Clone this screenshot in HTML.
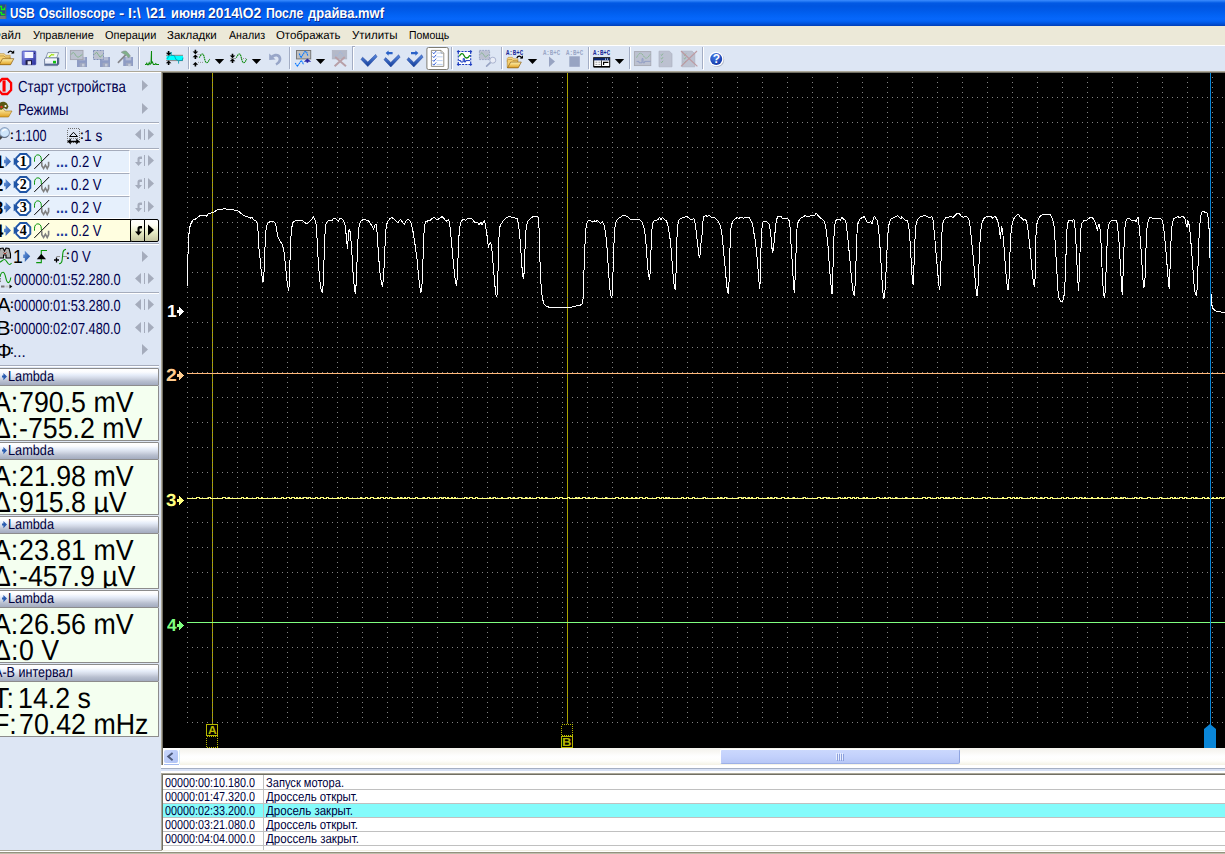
<!DOCTYPE html>
<html lang="ru"><head><meta charset="utf-8"><title>USB Oscilloscope</title>
<style>
html,body{margin:0;padding:0;background:#dde6f4;overflow:hidden}
#root{position:relative;width:1225px;height:854px;overflow:hidden;background:#dde6f4;font-family:"Liberation Sans",sans-serif}
#root div,#root span,#root svg{position:absolute;box-sizing:border-box}
.t{white-space:pre;transform-origin:0 0;text-rendering:geometricPrecision}
#title{left:0;top:0;width:1225px;height:26px;background:linear-gradient(to bottom,#3c8cff 0px,#1f74f2 1.5px,#0259e4 3px,#0055e0 6px,#005ae8 10px,#0262f4 15px,#0667fb 19px,#0463f5 21px,#0057e3 23px,#0048c8 25px,#003cb4 26px)}
#menu{left:0;top:26px;width:1225px;height:19px;background:#ece9d8}
#tb{left:0;top:45px;width:1225px;height:26px;background:#dde6f4;border-top:1px solid #fff}
#tbline{left:0;top:71px;width:1225px;height:1px;background:#aca899}
.sep{top:47px;width:2px;height:22px;border-left:1px solid #a7b1c6;border-right:1px solid #fff}
#panel{left:0;top:73px;width:161px;height:781px;background:#dde6f4}
#pwhite{left:0;top:72px;width:161px;height:1px;background:#fff}
.hl{left:0;width:159px;height:2px;border-top:1px solid #a5acbc;border-bottom:1px solid #fff}
.row{left:0;width:130px;height:23px;background:#e6f0fc;border-top:1px solid #a5acbc;border-bottom:1px solid #fff;border-right:1px solid #fff}
.rowsel{left:0;width:131px;height:23px;background:#fffee0;border-top:1px solid #000;border-bottom:1px solid #000}
.btn{height:23px;border:1px solid #000;background:linear-gradient(to bottom,#fff 0,#fdfdf4 25%,#e6eac4 60%,#c6c6a2 100%)}
.hdr{left:-2px;width:161px;height:18px;border:1px solid #8c8c8c;border-radius:1px;background:linear-gradient(to bottom,#ffffff 0,#fbfcfe 3px,#e6edf9 6px,#d3d9e6 9px,#b9c0d0 12px,#a3abbf 16px)}
.val{left:-2px;width:161px;height:55px;border:1px solid #8c8c8c;border-top:none;border-radius:0 0 1px 1px;background:#f4fff0}
#plotb{left:161px;top:71px;width:1064px;height:694px;background:#716f64;border-left:1px solid #aca899;border-top:1px solid #aca899}
#plot{left:163px;top:73px;width:1062px;height:675px;background:#000}
#hs{left:163px;top:748px;width:1062px;height:17px;background:linear-gradient(to bottom,#f3f1ec 0,#f7f6f2 3px,#fdfdfc 7px,#fff 9px,#fefefb 13px,#f3f1e4 17px)}
#hsl{left:164px;top:750px;width:14px;height:13px;border-radius:2px;background:linear-gradient(135deg,#c9d7fc 0,#bdcdf9 50%,#aec1f4 100%);box-shadow:0 0 0 1px #fff}
#hst{left:720px;top:749px;width:240px;height:15px;border:1px solid #fff;border-bottom-color:#9db0e6;border-right-color:#8fa4e0;border-radius:2px;background:linear-gradient(to bottom,#cbd8fd 0,#c3d1fc 50%,#b7c7f6 100%)}
#split{left:161px;top:765px;width:1064px;height:8px;background:linear-gradient(to bottom,#fff 0,#fff 3px,#a5afc3 3px,#a5afc3 4px,#d7e1f5 4px,#d7e1f5 6px,#fff 6px,#fff 8px)}
#list{left:161px;top:773px;width:1064px;height:77px;background:#fff;border-top:2px solid #716f64;border-left:2px solid #716f64}
.lr{left:163px;width:1062px;height:14px;border-bottom:1px solid #c0c0c0}
.lr.sel{background:#84fbfb}
#lcol{left:263px;top:775px;width:1px;height:75px;background:#c0c0c0}
#bottom{left:0;top:850px;width:1225px;height:4px;background:linear-gradient(to bottom,#f1efe2 0,#f1efe2 1px,#fff 1px,#fff 2px,#94927f 2px,#94927f 3px,#c0beac 3px,#c0beac 4px)}
.grp{left:0;top:0;width:0;height:0}
#listb{left:161px;top:773px;width:1064px;height:1px;background:#aca899}
#listb2{left:161px;top:773px;width:1px;height:77px;background:#aca899}
#pbot{left:0;top:850px;width:162px;height:1px;background:#aca899}
#hsl2{left:164px;top:764px;width:15px;height:1px;background:#a5bcf0}
#hsl3{left:179px;top:750px;width:1px;height:14px;background:#d9eef8}
#hsw{left:163px;top:748px;width:17px;height:17px;background:#fff}

</style></head>
<body>
<div id="root">
<div id="title"></div>
<div id="menu"></div>
<div id="tb"></div>
<div id="tbline"></div>
<div id="panel"></div>
<div id="pwhite"></div>
<div class="hl" style="top:122px"></div>
<div class="hl" style="top:148px"></div>
<div class="hl" style="top:243px"></div>
<div class="hl" style="top:292px"></div>
<div class="hl" style="top:365px"></div>
<div class="row" style="top:150px"></div>
<div class="row" style="top:173px"></div>
<div class="row" style="top:196px"></div>
<div class="rowsel" style="top:219px"></div>
<div class="btn" style="left:130px;top:219px;width:15px;border-radius:2px 0 0 2px"></div><div class="btn" style="left:144px;top:219px;width:15px;border-radius:0 2px 2px 0"></div>
<div class="hdr" style="top:368px"></div><div class="val" style="top:386px"></div>
<div class="hdr" style="top:442px"></div><div class="val" style="top:460px"></div>
<div class="hdr" style="top:516px"></div><div class="val" style="top:534px"></div>
<div class="hdr" style="top:590px"></div><div class="val" style="top:608px"></div>
<div class="hdr" style="top:664px"></div><div class="val" style="top:682px"></div>
<div id="plotb"></div><div id="plot"></div>
<div id="hs"></div>
<div id="hsw"></div><div id="hsl"></div><div id="hsl2"></div><div id="hsl3"></div>
<div id="hst"></div>
<div id="split"></div>
<div id="list"></div>
<div class="lr" style="top:776px"></div>
<div class="lr" style="top:790px"></div>
<div class="lr sel" style="top:804px"></div>
<div class="lr" style="top:818px"></div>
<div class="lr" style="top:832px"></div>
<div class="lr" style="top:846px"></div>
<div id="lcol"></div><div id="listb"></div><div id="listb2"></div>
<div id="bottom"></div><div id="pbot"></div>
<svg id="scope" width="1225" height="854" viewBox="0 0 1225 854" style="left:0;top:0" shape-rendering="crispEdges">
<g stroke="#aaa200" stroke-width="1"><line x1="212.5" y1="73" x2="212.5" y2="724"/><line x1="567.5" y1="73" x2="567.5" y2="724"/></g>
<path d="M187.5 77V723 M212.5 77V723 M237.5 77V723 M262.5 77V723 M287.5 77V723 M312.5 77V723 M337.5 77V723 M362.5 77V723 M387.5 77V723 M412.5 77V723 M437.5 77V723 M462.5 77V723 M487.5 77V723 M512.5 77V723 M537.5 77V723 M562.5 77V723 M587.5 77V723 M612.5 77V723 M637.5 77V723 M662.5 77V723 M687.5 77V723 M712.5 77V723 M737.5 77V723 M762.5 77V723 M787.5 77V723 M812.5 77V723 M837.5 77V723 M862.5 77V723 M887.5 77V723 M912.5 77V723 M937.5 77V723 M962.5 77V723 M987.5 77V723 M1012.5 77V723 M1037.5 77V723 M1062.5 77V723 M1087.5 77V723 M1112.5 77V723 M1137.5 77V723 M1162.5 77V723 M1187.5 77V723 M1212.5 77V723 M187 97.5H1225 M187 122.5H1225 M187 147.5H1225 M187 172.5H1225 M187 197.5H1225 M187 222.5H1225 M187 247.5H1225 M187 272.5H1225 M187 297.5H1225 M187 322.5H1225 M187 347.5H1225 M187 372.5H1225 M187 397.5H1225 M187 422.5H1225 M187 447.5H1225 M187 472.5H1225 M187 497.5H1225 M187 522.5H1225 M187 547.5H1225 M187 572.5H1225 M187 597.5H1225 M187 622.5H1225 M187 647.5H1225 M187 672.5H1225 M187 697.5H1225 M187 722.5H1225" stroke="#848484" stroke-width="1" stroke-dasharray="1 4" fill="none"/>
<path d="M1204 748V729L1210 724L1216 729V748Z" fill="#0a86d8" shape-rendering="auto"/>
<line x1="187" y1="373.5" x2="1225" y2="373.5" stroke="#ffb97a"/>
<line x1="187" y1="622.5" x2="1225" y2="622.5" stroke="#80ff80"/>
<path d="M187 498.5H196V497.5H199V498.5H208V497.5H210V498.5H222V497.5H225V498.5H228V497.5H229V498.5H241V497.5H243V498.5H246V497.5H247V498.5H256V497.5H258V498.5H261V497.5H262V498.5H274V497.5H275V498.5H281V497.5H283V498.5H286V497.5H289V498.5H291V497.5H294V498.5H296V497.5H297V498.5H299V497.5H300V498.5H303V497.5H306V498.5H308V497.5H310V498.5H315V497.5H317V498.5H320V497.5H323V498.5H326V497.5H328V498.5H337V497.5H338V498.5H340V497.5H342V498.5H346V497.5H348V498.5H360V497.5H361V498.5H365V497.5H367V498.5H370V497.5H373V498.5H377V497.5H378V498.5H380V497.5H383V498.5H385V497.5H387V498.5H389V497.5H391V498.5H397V497.5H398V498.5H400V497.5H401V498.5H404V497.5H405V498.5H407V497.5H409V498.5H415V497.5H417V498.5H423V497.5H424V498.5H427V497.5H429V498.5H434V497.5H435V498.5H439V497.5H441V498.5H443V497.5H445V498.5H447V497.5H448V498.5H451V497.5H452V498.5H454V497.5H455V498.5H464V497.5H466V498.5H469V497.5H472V498.5H475V497.5H477V498.5H489V497.5H490V498.5H493V497.5H495V498.5H501V497.5H502V498.5H508V497.5H510V498.5H513V497.5H514V498.5H518V497.5H521V498.5H525V497.5H526V498.5H529V497.5H530V498.5H536V497.5H539V498.5H541V497.5H542V498.5H545V497.5H546V498.5H555V497.5H557V498.5H559V497.5H562V498.5H567V497.5H569V498.5H575V497.5H576V498.5H578V497.5H579V498.5H582V497.5H585V498.5H588V497.5H589V498.5H594V497.5H596V498.5H605V497.5H606V498.5H615V497.5H618V498.5H621V497.5H623V498.5H626V497.5H627V498.5H631V497.5H632V498.5H635V497.5H636V498.5H639V497.5H642V498.5H645V497.5H647V498.5H656V497.5H659V498.5H661V497.5H663V498.5H665V497.5H666V498.5H668V497.5H669V498.5H681V497.5H683V498.5H686V497.5H688V498.5H692V497.5H694V498.5H703V497.5H705V498.5H717V497.5H718V498.5H720V497.5H721V498.5H724V497.5H726V498.5H738V497.5H741V498.5H743V497.5H745V498.5H748V497.5H749V498.5H751V497.5H752V498.5H756V497.5H758V498.5H767V497.5H768V498.5H770V497.5H771V498.5H774V497.5H776V498.5H781V497.5H784V498.5H787V497.5H788V498.5H793V497.5H794V498.5H803V497.5H805V498.5H817V497.5H820V498.5H823V497.5H826V498.5H828V497.5H829V498.5H838V497.5H840V498.5H844V497.5H845V498.5H847V497.5H850V498.5H852V497.5H854V498.5H856V497.5H858V498.5H863V497.5H864V498.5H866V497.5H867V498.5H876V497.5H879V498.5H884V497.5H885V498.5H888V497.5H890V498.5H895V497.5H896V498.5H905V497.5H906V498.5H912V497.5H913V498.5H922V497.5H925V498.5H927V497.5H930V498.5H936V497.5H938V498.5H940V497.5H943V498.5H945V497.5H946V498.5H948V497.5H949V498.5H953V497.5H955V498.5H960V497.5H962V498.5H971V497.5H973V498.5H982V497.5H985V498.5H987V497.5H990V498.5H1002V497.5H1003V498.5H1007V497.5H1010V498.5H1012V497.5H1014V498.5H1016V497.5H1017V498.5H1019V497.5H1021V498.5H1030V497.5H1032V498.5H1034V497.5H1036V498.5H1040V497.5H1041V498.5H1044V497.5H1047V498.5H1050V497.5H1052V498.5H1061V497.5H1063V498.5H1066V497.5H1068V498.5H1074V497.5H1076V498.5H1079V497.5H1081V498.5H1084V497.5H1085V498.5H1091V497.5H1092V498.5H1097V497.5H1098V498.5H1101V497.5H1102V498.5H1111V497.5H1113V498.5H1115V497.5H1116V498.5H1120V497.5H1121V498.5H1123V497.5H1125V498.5H1134V497.5H1136V498.5H1139V497.5H1141V498.5H1147V497.5H1150V498.5H1159V497.5H1161V498.5H1170V497.5H1172V498.5H1174V497.5H1175V498.5H1179V497.5H1182V498.5H1184V497.5H1186V498.5H1191V497.5H1193V498.5H1195V497.5H1196V498.5H1202V497.5H1204V498.5H1207V497.5H1208V498.5H1212V497.5H1213V498.5H1216V497.5H1217V498.5H1219V497.5H1221V498.5H1223V497.5H1225V498.5" stroke="#ffff80" fill="none" stroke-linejoin="miter"/>
<path d="M187.5 285.5 187.5 266.0 188.7 237.7 189.4 228.3 191.2 222.9 193.0 219.9 195.5 219.2 198.2 216.6 200.8 215.5 204.2 215.2 206.5 216.2 208.2 213.9 210.3 213.2 212.6 212.8 215.0 211.4 217.7 209.4 221.0 209.2 224.4 208.8 227.8 209.4 231.1 209.7 234.5 210.1 237.5 210.5 239.9 212.4 242.6 214.5 245.3 216.4 248.0 216.8 250.0 218.2 252.0 217.5 254.0 219.9 256.0 220.9 257.4 224.2 258.1 232.3 258.7 240.4 259.0 248.5 260.1 259.2 261.2 271.3 262.5 279.4 263.0 282.4 263.8 279.4 264.4 257.9 265.2 244.4 265.7 233.7 266.5 225.6 268.2 222.9 270.2 221.5 272.9 221.3 274.9 222.9 276.2 226.9 277.6 236.3 279.6 240.4 282.3 244.4 283.6 248.5 284.6 256.5 285.7 267.3 286.7 279.4 288.1 287.5 288.3 290.5 289.2 286.2 289.7 267.3 290.4 251.2 291.0 236.3 292.1 225.6 293.1 222.2 295.8 220.5 299.1 220.2 302.5 220.5 304.5 222.2 306.1 223.6 307.9 222.9 309.9 220.9 311.9 219.5 313.3 216.4 315.0 220.2 316.0 224.2 316.8 233.7 317.7 251.2 318.7 267.3 319.8 280.8 321.2 290.2 322.2 292.6 323.0 286.2 323.6 272.7 324.1 257.9 324.7 240.4 325.2 229.6 326.0 224.2 327.5 221.3 329.5 220.5 332.2 220.2 333.5 218.4 335.6 218.2 336.9 220.2 338.2 221.3 339.9 218.4 341.6 218.8 343.6 220.9 345.0 224.9 345.9 232.3 346.7 240.4 347.4 248.5 348.1 240.4 349.0 229.6 350.1 231.6 350.8 239.0 351.7 248.5 352.4 261.9 353.2 275.4 354.3 287.5 355.3 293.6 356.2 283.5 356.8 267.3 357.5 251.2 358.2 235.0 359.1 225.6 360.7 221.5 363.2 219.5 365.8 219.8 368.5 220.9 370.6 223.6 372.3 226.9 373.7 229.3 375.0 224.9 376.3 224.6 377.3 235.0 378.0 247.1 378.8 259.2 380.0 272.7 381.3 282.1 382.4 286.4 383.3 279.4 384.2 264.6 384.8 251.2 385.5 235.0 386.3 225.6 387.7 221.5 389.8 218.8 391.7 217.5 393.8 218.8 396.1 221.3 398.2 222.6 399.5 220.2 400.8 219.5 402.5 222.2 404.2 224.5 405.6 221.5 406.9 219.9 409.2 219.9 410.9 222.9 412.7 229.6 414.0 237.7 415.4 247.1 417.0 259.2 418.3 272.7 419.7 286.2 421.0 292.6 422.1 283.5 422.7 267.3 423.2 253.8 423.7 237.7 424.5 225.6 425.8 221.8 427.8 220.9 430.2 220.5 431.8 218.8 433.8 217.2 435.6 218.6 437.2 219.5 439.2 218.8 441.0 217.5 442.0 216.4 443.6 218.2 445.4 220.2 446.7 221.3 448.5 219.1 449.5 222.2 450.3 229.6 451.4 240.4 452.5 253.8 453.8 267.3 455.2 279.4 456.4 285.5 457.1 279.4 457.6 267.3 458.2 253.8 458.7 240.4 459.5 228.3 460.6 222.9 462.2 220.2 463.8 219.2 465.6 220.2 467.6 218.6 469.6 218.2 471.6 218.4 473.6 220.9 475.4 222.9 477.0 221.8 479.0 224.9 480.8 222.2 482.1 224.9 483.5 221.5 484.5 220.5 485.3 224.2 486.4 231.0 487.5 239.0 488.4 247.8 489.4 243.8 490.5 242.4 491.5 245.8 492.5 256.5 493.4 267.3 494.5 280.8 495.6 292.9 496.5 296.7 497.5 294.2 497.9 275.4 498.3 259.2 498.8 243.1 499.3 229.6 500.2 225.6 501.9 222.9 503.9 219.9 506.6 217.5 509.3 216.4 512.0 217.2 514.7 217.9 517.1 218.6 518.2 222.9 519.3 231.0 520.1 240.4 520.9 251.2 521.7 263.3 522.5 274.0 523.4 278.5 524.1 272.7 524.5 259.2 525.2 245.8 525.7 233.7 526.5 224.9 528.2 220.9 530.2 218.6 532.9 216.8 535.6 216.8 537.8 216.4 538.7 218.8 539.2 232.3 539.7 253.8 540.3 270.0 541.1 286.2 542.3 298.3 544.0 303.7 546.3 306.3 549.7 307.4 556.4 307.6 567.5 307.6 571.2 307.4 572.0 307.0 576.0 306.1 580.1 305.3 582.1 303.7 583.0 299.6 583.6 286.2 584.1 267.3 584.7 251.2 585.5 232.3 586.5 224.2 588.2 220.9 590.2 220.5 592.2 221.5 594.2 220.9 596.0 221.5 597.3 220.5 598.9 221.8 600.5 223.6 602.3 221.5 603.6 223.6 605.0 229.6 606.3 239.0 607.3 251.2 608.1 264.6 609.0 278.1 610.0 290.2 611.0 296.2 611.8 297.2 612.4 292.9 612.8 280.8 613.2 264.6 613.7 251.2 614.3 236.3 615.1 225.6 616.4 220.9 618.4 218.2 620.5 217.2 622.5 215.9 624.5 215.2 626.5 216.2 628.5 217.5 630.2 219.5 633.9 219.5 637.6 219.5 640.0 219.9 642.0 222.2 644.0 228.3 645.4 236.3 646.3 247.1 647.1 259.2 648.1 271.3 649.0 277.4 649.5 279.4 650.1 272.7 650.6 259.2 651.2 245.8 651.7 232.3 652.5 223.6 654.1 220.9 656.1 220.5 658.2 219.5 659.5 217.2 660.8 219.9 662.5 217.5 664.2 219.5 666.2 220.9 667.6 223.6 668.9 231.0 670.3 240.4 671.3 251.2 672.3 264.6 673.2 276.7 674.3 286.2 675.2 289.5 675.7 283.5 676.1 270.0 676.5 253.8 677.0 237.7 677.7 225.6 679.0 220.2 681.0 218.2 683.7 217.5 686.4 216.4 688.4 217.5 690.5 219.5 692.5 219.9 693.8 218.2 694.8 221.5 695.8 228.3 696.9 237.7 698.0 247.1 698.8 255.2 699.5 257.6 700.2 253.8 701.0 243.1 702.3 232.3 702.8 221.5 703.9 216.8 705.4 215.5 707.4 216.4 709.4 215.5 711.2 217.2 714.1 217.2 716.1 219.1 718.2 221.5 720.2 225.6 721.5 231.0 722.5 239.0 723.5 249.8 724.6 261.9 725.7 274.0 726.8 286.2 727.8 292.2 728.4 293.6 728.9 286.2 729.3 272.7 729.7 256.5 730.3 240.4 730.9 228.3 732.3 222.2 734.3 219.5 736.7 217.8 739.0 218.2 741.0 217.2 743.7 218.2 746.4 217.2 748.8 217.2 750.7 220.2 752.5 224.2 753.8 232.3 755.2 240.4 756.5 251.2 757.5 261.9 758.3 272.7 759.1 283.5 759.8 288.6 760.2 280.8 760.6 264.6 761.0 248.5 761.5 233.7 762.3 224.9 763.2 221.5 765.3 221.3 767.3 222.2 769.0 223.6 770.1 229.6 771.2 239.0 772.0 248.5 772.8 252.5 773.6 247.1 774.4 239.0 775.4 228.3 776.3 220.2 777.7 216.8 779.4 216.2 781.2 216.8 782.1 218.2 784.8 218.4 787.5 218.2 789.2 220.9 790.2 228.3 790.8 240.4 791.7 253.8 792.5 267.3 793.3 280.8 794.2 292.9 794.9 283.5 795.4 267.3 796.0 253.8 796.5 236.3 797.3 224.2 798.7 220.9 800.9 218.2 803.0 217.2 805.0 215.5 807.0 216.4 809.7 216.2 812.4 215.5 814.8 215.1 816.4 213.2 818.0 215.5 819.8 217.5 821.8 218.8 823.8 220.9 825.2 224.2 826.5 232.3 827.9 244.4 828.8 257.9 829.9 272.7 831.0 284.8 832.0 294.2 832.5 280.8 833.1 264.6 833.6 245.8 834.4 226.9 835.4 221.5 836.7 219.5 838.7 219.2 840.3 220.2 841.7 217.2 843.4 218.8 845.2 220.2 846.3 224.2 847.1 232.3 848.2 241.7 849.2 252.5 850.2 263.3 851.1 274.0 852.2 284.8 853.3 292.9 854.2 295.3 854.9 288.8 855.4 275.4 856.0 261.9 856.5 247.1 857.0 233.7 857.8 224.2 859.2 220.2 860.9 218.2 863.0 217.5 864.3 216.4 865.7 219.5 867.3 222.2 869.0 222.9 870.4 221.3 872.1 223.6 873.5 217.5 874.5 216.4 875.8 218.8 877.1 220.2 878.0 224.9 879.1 235.0 879.9 245.8 880.7 257.9 881.5 271.3 882.3 284.8 883.2 295.6 884.0 298.5 884.8 294.2 885.4 283.5 886.1 270.0 886.7 256.5 887.5 240.4 888.3 228.3 889.6 221.5 891.2 218.8 893.2 217.9 895.3 216.8 897.6 215.5 899.3 217.5 900.9 218.8 901.7 216.8 903.3 218.2 905.4 220.2 907.4 220.5 908.7 225.6 909.5 233.7 910.3 245.8 911.0 257.9 911.7 270.0 912.5 282.1 913.2 284.8 913.7 275.4 914.1 261.9 914.7 247.1 915.2 233.7 916.1 224.2 917.5 219.5 919.5 217.2 922.2 216.4 924.9 215.5 926.9 216.2 928.7 217.5 930.3 217.2 931.9 216.4 933.0 220.2 934.0 229.6 935.0 240.4 935.9 251.2 936.7 260.6 937.7 271.3 938.6 283.5 939.7 289.5 940.4 280.8 940.8 267.3 941.3 251.2 941.8 235.0 942.7 224.2 944.0 220.2 945.8 217.9 948.4 217.2 951.1 216.4 953.2 217.5 955.2 215.5 956.9 213.7 958.5 213.2 960.2 214.8 962.0 216.8 963.3 217.2 965.4 216.2 967.4 217.2 969.0 220.2 970.1 226.9 971.2 236.3 972.2 247.1 973.3 257.9 974.4 270.0 975.5 283.5 976.3 292.9 977.1 295.8 977.9 288.8 978.4 278.1 979.0 264.6 979.5 249.8 980.3 237.7 981.1 228.3 982.2 222.2 983.8 218.8 986.0 216.8 988.2 216.2 990.9 216.4 992.7 218.2 994.3 216.4 995.7 216.8 997.0 219.5 998.3 222.9 999.4 229.6 1000.4 238.4 1001.0 232.3 1001.8 226.2 1002.7 232.3 1003.5 240.4 1004.3 251.2 1005.1 261.9 1005.9 272.7 1007.0 283.5 1008.0 290.2 1008.8 283.5 1009.4 270.0 1009.9 255.2 1010.5 240.4 1011.3 229.6 1012.3 222.9 1013.8 218.8 1015.8 216.2 1017.2 214.8 1018.5 214.1 1019.9 216.8 1021.9 218.2 1023.7 220.2 1025.0 218.8 1026.3 220.9 1027.4 225.6 1028.5 233.7 1029.6 244.4 1030.7 255.2 1031.7 267.3 1032.8 278.1 1033.9 284.8 1034.6 286.8 1035.0 279.4 1035.2 264.6 1035.5 251.2 1036.0 235.0 1036.8 224.2 1038.1 219.5 1040.1 216.2 1042.5 214.4 1045.5 214.1 1048.2 214.5 1050.2 214.1 1051.5 216.8 1052.9 220.2 1054.1 226.9 1054.9 237.7 1055.7 251.2 1056.5 264.6 1057.3 279.4 1058.1 292.9 1059.2 298.9 1060.5 301.2 1061.6 301.8 1063.0 300.3 1064.3 294.2 1065.1 280.8 1065.7 264.6 1066.2 248.5 1066.7 232.3 1067.5 223.6 1069.0 220.5 1071.0 220.2 1072.4 221.3 1073.7 219.1 1074.5 222.2 1075.3 231.0 1076.2 247.1 1077.0 264.6 1077.8 280.8 1078.6 290.5 1079.1 280.8 1079.7 264.6 1080.2 245.8 1080.7 229.6 1081.8 223.6 1083.8 220.9 1085.0 220.5 1086.6 220.2 1088.4 218.8 1090.4 217.2 1092.4 217.8 1094.2 220.2 1095.5 222.9 1096.4 226.9 1097.4 230.3 1098.2 225.6 1099.1 224.2 1100.1 229.6 1100.9 240.4 1101.4 253.8 1102.0 267.3 1102.8 283.5 1103.6 294.2 1104.5 297.2 1105.2 291.5 1105.7 280.8 1106.3 264.6 1106.8 251.2 1107.3 237.7 1108.2 226.9 1109.5 222.9 1111.2 220.9 1113.3 220.2 1115.3 220.2 1116.8 221.3 1117.8 228.3 1118.9 240.4 1119.7 253.8 1120.5 267.3 1121.3 280.8 1122.2 294.2 1122.7 286.2 1123.2 270.0 1123.8 253.8 1124.3 237.7 1125.1 225.6 1126.1 220.9 1127.4 218.6 1129.2 218.2 1130.8 219.9 1132.8 220.5 1134.5 220.2 1136.2 221.5 1137.2 218.2 1138.2 217.5 1138.8 222.9 1139.7 232.3 1140.7 244.4 1141.5 256.5 1142.3 270.0 1143.2 282.1 1144.0 287.5 1144.8 283.5 1145.3 270.0 1145.8 253.8 1146.4 237.7 1147.2 225.6 1148.3 220.2 1149.6 217.9 1151.0 217.2 1153.0 218.6 1155.0 218.2 1157.0 218.8 1159.0 218.2 1161.1 218.8 1162.4 220.9 1163.6 226.9 1164.7 237.7 1165.8 249.8 1166.8 261.9 1167.9 275.4 1168.7 284.8 1169.4 288.6 1169.8 275.4 1170.3 259.2 1170.9 243.1 1171.6 229.6 1172.5 222.2 1173.8 218.8 1175.9 217.2 1177.9 216.8 1179.9 217.5 1181.9 216.4 1183.9 217.2 1185.3 219.5 1186.2 225.6 1187.0 226.9 1187.8 220.2 1188.9 223.6 1190.0 232.3 1191.1 244.4 1192.2 257.9 1193.2 272.7 1194.3 287.5 1195.4 294.2 1196.5 295.6 1197.3 286.2 1197.8 272.7 1198.3 256.5 1198.9 240.4 1199.7 225.6 1200.8 215.5 1202.1 212.1 1203.7 211.4 1205.5 212.8 1206.8 212.4 1207.8 215.5 1208.6 221.5 1209.4 235.0 1209.9 253.8 1210.5 275.4 1211.0 294.2 1211.5 303.7 1212.9 308.4 1214.9 310.4 1217.6 311.5 1221.0 312.0 1225.0 312.4" stroke="#fff" stroke-width="1" fill="none" stroke-linejoin="round" shape-rendering="crispEdges"/>
<line x1="1210.5" y1="73" x2="1210.5" y2="725" stroke="#0a86d8" stroke-width="1"/>
<path d="M177 310H179.3V306.8L184.3 311.5L179.3 316.2V313H177Z" fill="#fff"/>
<path d="M177 374H179.3V370.8L184.3 375.5L179.3 380.2V377H177Z" fill="#ffcc8f"/>
<path d="M177 499H179.3V495.8L184.3 500.5L179.3 505.2V502H177Z" fill="#ffff80"/>
<path d="M177 624H179.3V620.8L184.3 625.5L179.3 630.2V627H177Z" fill="#80ff80"/>
<rect x="206.5" y="724.5" width="11" height="11" rx="1" fill="none" stroke="#b8b800"/>
<rect x="206.5" y="736.5" width="11" height="11" fill="none" stroke="#b8b800" stroke-dasharray="1 1"/>
<rect x="561.5" y="724.5" width="11" height="11" fill="none" stroke="#b8b800" stroke-dasharray="1 1"/>
<rect x="561.5" y="736.5" width="11" height="11" rx="1" fill="none" stroke="#b8b800"/>
</svg>
<svg id="icons" width="1225" height="854" viewBox="0 0 1225 854" style="left:0;top:0">
<defs>
<linearGradient id="gba" x1="0" y1="0" x2="1" y2="1"><stop offset="0" stop-color="#6d9be0"/><stop offset="1" stop-color="#1c4ea0"/></linearGradient>
<linearGradient id="gfold" x1="0" y1="0" x2="0" y2="1"><stop offset="0" stop-color="#fff3b0"/><stop offset="1" stop-color="#e0a020"/></linearGradient>
<linearGradient id="gchk" x1="0" y1="0" x2="0" y2="1"><stop offset="0" stop-color="#5a8ae0"/><stop offset="1" stop-color="#123c98"/></linearGradient>
<linearGradient id="gflop" x1="0" y1="0" x2="1" y2="1"><stop offset="0" stop-color="#8d97f0"/><stop offset="1" stop-color="#2a2f9c"/></linearGradient>
<radialGradient id="ghelp" cx="0.4" cy="0.3" r="0.8"><stop offset="0" stop-color="#4a7de8"/><stop offset="1" stop-color="#0a2fa0"/></radialGradient>
<g id="barrow"><path d="M0 -1.7H1.6V-5.6L7 0L1.6 5.6V1.7H0Z" fill="url(#gba)"/></g>
<g id="oct"><path d="M5.7 -7.5H11.8L15.8 -3.4V3.4L11.8 7.5H5.7L1.7 3.4V-3.4Z" fill="#fff" stroke="#1f55a6" stroke-width="1.9"/><path d="M-0.8 -3.8L4.8 0L-0.8 3.8Z" fill="#1f55a6"/></g>
<g id="sine"><path d="M0.5 8V5.5C0.5 -0.3 7.3 -0.3 7.3 5.5V7.5" fill="none" stroke="#0a960a" stroke-width="1"/><path d="M7.8 8.5V12L9.6 14.8L11.4 11.5L13.2 14.8L14.6 12V8" fill="none" stroke="#808080" stroke-width="1.6"/><path d="M0.3 15.2L15.2 0.3" stroke="#000" stroke-width="1"/></g>
<g id="tri-r"><path d="M0 0L6 5.5L0 11Z"/></g>
<g id="tri-l"><path d="M6 0L0 5.5L6 11Z"/></g>
<g id="lr"><use href="#tri-l" x="0"/><rect x="9" y="0" width="1" height="11"/><use href="#tri-r" x="13"/></g>
<g id="ret"><path d="M7 1.5V4H5C4.6 4 4.6 4.3 4.6 4.6V7H7L3.5 11L0 7H2.5V4.2C2.5 2.5 3.3 1.5 5 1.5Z"/></g><g id="retl"><use href="#ret"/><rect x="9" y="0" width="1" height="11"/><use href="#tri-r" x="13"/></g>
<g id="dd"><path d="M0 0H9L4.5 4.5Z" fill="#000"/></g>
</defs>
<use href="#tri-r" x="142" y="80" fill="#a5acbc"/>
<use href="#tri-r" x="142" y="103" fill="#a5acbc"/>
<use href="#tri-r" x="142" y="251" fill="#a5acbc"/>
<use href="#tri-r" x="142" y="344" fill="#a5acbc"/>
<use href="#lr" x="135" y="129" fill="#a5acbc"/>
<use href="#lr" x="135" y="273" fill="#a5acbc"/>
<use href="#lr" x="135" y="299" fill="#a5acbc"/>
<use href="#lr" x="135" y="322" fill="#a5acbc"/>
<use href="#retl" x="135" y="155" fill="#a5acbc"/>
<use href="#retl" x="135" y="178" fill="#a5acbc"/>
<use href="#retl" x="135" y="201" fill="#a5acbc"/>
<use href="#ret" x="135" y="224.5" fill="#000"/>
<path d="M148 224.5L154 230L148 235.5Z" fill="#000"/>
<polygon points="2.2,78.9 7.3,78.9 11.1,83 11.1,90 7.3,94 2.2,94 -1.6,90 -1.6,83" fill="none" stroke="#ff0000" stroke-width="2.3" stroke-linejoin="miter"/>
<rect x="2.5" y="80.4" width="3.1" height="11.2" fill="#ff0000"/>
<path d="M-2 110L3 108.5L5 111H12L8.5 117H-2Z" fill="url(#gfold)" stroke="#a07010" stroke-width="0.6"/>
<path d="M-1 104C0 101.5 5 101 7 103.5L8.5 106.5L7 109.5L4 108L1 110L-1 108Z" fill="#5a5a14"/>
<circle cx="1.5" cy="107" r="1.2" fill="#e03020"/><circle cx="5.5" cy="106" r="1.1" fill="#fff"/>
<path d="M1.6 136.6L-1.5 139.8" stroke="#444" stroke-width="2.6" stroke-linecap="round"/>
<circle cx="4.6" cy="132.5" r="4.9" fill="#cfe6fb" stroke="#8fa3c0" stroke-width="1.1"/>
<path d="M0.6 135.4C2 138 6 138.4 8.4 135.8" stroke="#5c6a80" stroke-width="1" fill="none"/>
<path d="M2.5 131.5C3 129.8 5 129.2 6.5 130" stroke="#fff" stroke-width="1.2" fill="none"/>
<rect x="67.5" y="128.5" width="12" height="14" fill="none" stroke="#707070" stroke-width="1" stroke-dasharray="1 1" shape-rendering="crispEdges"/>
<path d="M73.5 132.3L77.5 136.5H69.5Z" fill="none" stroke="#000" stroke-width="1"/>
<path d="M69 138.5H78" stroke="#888" stroke-dasharray="1 1" shape-rendering="crispEdges"/>
<path d="M67.3 141.5L70.8 138.6V140.8H76.2V138.6L79.7 141.5L76.2 144.4V142.2H70.8V144.4Z" fill="#000"/>
<use href="#barrow" x="4" y="161.5"/>
<use href="#oct" x="14.5" y="161.5"/>
<use href="#sine" x="34" y="153.7"/>
<text x="23.2" y="166.1" font-family="Liberation Serif, serif" font-weight="700" font-size="14" text-anchor="middle" fill="#000">1</text>
<use href="#barrow" x="4" y="184.5"/>
<use href="#oct" x="14.5" y="184.5"/>
<use href="#sine" x="34" y="176.7"/>
<text x="23.2" y="189.1" font-family="Liberation Serif, serif" font-weight="700" font-size="14" text-anchor="middle" fill="#000">2</text>
<use href="#barrow" x="4" y="207.5"/>
<use href="#oct" x="14.5" y="207.5"/>
<use href="#sine" x="34" y="199.7"/>
<text x="23.2" y="212.1" font-family="Liberation Serif, serif" font-weight="700" font-size="14" text-anchor="middle" fill="#000">3</text>
<use href="#barrow" x="4" y="230.5"/>
<use href="#oct" x="14.5" y="230.5"/>
<use href="#sine" x="34" y="222.7"/>
<text x="23.2" y="235.1" font-family="Liberation Serif, serif" font-weight="700" font-size="14" text-anchor="middle" fill="#000">4</text>
<path d="M0 248.5L3 248L4.5 251L6 248L9 248.5L10.5 254V258H6V255H3.5V258H-1V254Z" fill="#b0b0b0" stroke="#000" stroke-width="1.1"/>
<path d="M3.5 252.5L5 254L6.5 252.5" stroke="#a03020" stroke-width="1" fill="none"/>
<path d="M-1 262.5C1 262.5 2.5 259.5 4.5 259.5C6.5 259.5 7.5 264.5 9.5 264.5C10.5 264.5 11 263.8 11.5 263" fill="none" stroke="#0a960a" stroke-width="1.1"/>
<use href="#barrow" x="23.2" y="256.3"/>
<path d="M36.2 262.6H41.3V250.5H47" fill="none" stroke="#0a960a" stroke-width="1.1"/>
<path d="M41.3 253.8L46 259.3H36.8Z" fill="#000"/>
<path d="M56.5 256.5H60M62.5 256.5H67" stroke="#909090" stroke-width="1"/>
<path d="M59 263.8C61.5 263.8 62 262 62.2 259.5L62.8 253.5C63 251 63.8 249.6 66 249.4" fill="none" stroke="#0a960a" stroke-width="1.1"/>
<path d="M54 260H59M56.5 257.5V262.5" stroke="#000" stroke-width="1.3"/>
<path d="M0 277C0.5 274 1.5 272.3 3 272.3C6 272.3 5.5 282.6 8.3 282.6C9.8 282.6 10.4 280 10.8 277.5" fill="none" stroke="#0a960a" stroke-width="1.1"/>
<path d="M0.5 278V283" stroke="#808080" stroke-width="1" stroke-dasharray="1.5 1"/>
<path d="M1 286.5H4.5" stroke="#777" stroke-width="2"/><path d="M5.5 286.5H8.5" stroke="#c8c8c8" stroke-width="2"/><path d="M9.5 284.5L12.3 286.5L9.5 288.5Z" fill="#000"/>
<path d="M2 375.6H3.4V373L7 376.6L3.4 380.2V377.6H2Z" fill="#2a5cb0"/>
<path d="M2 449.6H3.4V447L7 450.6L3.4 454.2V451.6H2Z" fill="#2a5cb0"/>
<path d="M2 523.6H3.4V521L7 524.6L3.4 528.2V525.6H2Z" fill="#2a5cb0"/>
<path d="M2 597.6H3.4V595L7 598.6L3.4 602.2V599.6H2Z" fill="#2a5cb0"/>
<path d="M172.6 753L168.2 756.6L172.6 760.2" fill="none" stroke="#4d5a7c" stroke-width="1.9"/>
<path d="M836.5 753V760" stroke="#e8eefe" stroke-width="1" shape-rendering="crispEdges"/><path d="M837.5 753.5V760.5" stroke="#8ca0dc" stroke-width="1" shape-rendering="crispEdges"/>
<path d="M838.5 753V760" stroke="#e8eefe" stroke-width="1" shape-rendering="crispEdges"/><path d="M839.5 753.5V760.5" stroke="#8ca0dc" stroke-width="1" shape-rendering="crispEdges"/>
<path d="M840.5 753V760" stroke="#e8eefe" stroke-width="1" shape-rendering="crispEdges"/><path d="M841.5 753.5V760.5" stroke="#8ca0dc" stroke-width="1" shape-rendering="crispEdges"/>
<path d="M842.5 753V760" stroke="#e8eefe" stroke-width="1" shape-rendering="crispEdges"/><path d="M843.5 753.5V760.5" stroke="#8ca0dc" stroke-width="1" shape-rendering="crispEdges"/>
<rect x="-2" y="4.4" width="8.2" height="14.6" fill="#2c4a84"/><rect x="-2" y="16" width="8.2" height="3" fill="#7a7a7a"/><rect x="5.4" y="4.4" width="0.8" height="14.6" fill="#6a6a6a"/>
<path d="M-1 6.5H1.5V9.5H4.5V7.5M-1 12.5H1.5V14.5H4.8" fill="none" stroke="#10f010" stroke-width="1.3"/>
<path d="M65.5 47V69" stroke="#a3adc4" stroke-width="1" shape-rendering="crispEdges"/><path d="M66.5 47V70" stroke="#fff" stroke-width="1" shape-rendering="crispEdges"/>
<path d="M138.5 47V69" stroke="#a3adc4" stroke-width="1" shape-rendering="crispEdges"/><path d="M139.5 47V70" stroke="#fff" stroke-width="1" shape-rendering="crispEdges"/>
<path d="M188.5 47V69" stroke="#a3adc4" stroke-width="1" shape-rendering="crispEdges"/><path d="M189.5 47V70" stroke="#fff" stroke-width="1" shape-rendering="crispEdges"/>
<path d="M289.5 47V69" stroke="#a3adc4" stroke-width="1" shape-rendering="crispEdges"/><path d="M290.5 47V70" stroke="#fff" stroke-width="1" shape-rendering="crispEdges"/>
<path d="M451.5 47V69" stroke="#a3adc4" stroke-width="1" shape-rendering="crispEdges"/><path d="M452.5 47V70" stroke="#fff" stroke-width="1" shape-rendering="crispEdges"/>
<path d="M501.5 47V69" stroke="#a3adc4" stroke-width="1" shape-rendering="crispEdges"/><path d="M502.5 47V70" stroke="#fff" stroke-width="1" shape-rendering="crispEdges"/>
<path d="M588.5 47V69" stroke="#a3adc4" stroke-width="1" shape-rendering="crispEdges"/><path d="M589.5 47V70" stroke="#fff" stroke-width="1" shape-rendering="crispEdges"/>
<path d="M629.5 47V69" stroke="#a3adc4" stroke-width="1" shape-rendering="crispEdges"/><path d="M630.5 47V70" stroke="#fff" stroke-width="1" shape-rendering="crispEdges"/>
<path d="M702.5 47V69" stroke="#a3adc4" stroke-width="1" shape-rendering="crispEdges"/><path d="M703.5 47V70" stroke="#fff" stroke-width="1" shape-rendering="crispEdges"/>
<path d="M352.5 70V46.5H355" stroke="#a3adc4" fill="none" shape-rendering="crispEdges"/><path d="M353.5 70V47.5H355" stroke="#fff" fill="none" shape-rendering="crispEdges"/>
<path d="M214.8 59H224.20000000000002L219.5 64Z" fill="#000"/>
<path d="M251.8 59H261.2L256.5 64Z" fill="#000"/>
<path d="M315.8 59H325.2L320.5 64Z" fill="#000"/>
<path d="M527.8 59H537.1999999999999L532.5 64Z" fill="#000"/>
<path d="M614.8 59H624.1999999999999L619.5 64Z" fill="#000"/>
<g transform="translate(0 52.5) scale(1.0)"><path d="M-1 2.5L0 1.2H4.3L5.6 2.8H10.2V6H-1Z" fill="#f7d98a" stroke="#b98a2a" stroke-width="0.6"/><path d="M-1 12V4.2L0 3.4H4L5 4.6H10V12Z" fill="#f5cf70" stroke="#a87a20" stroke-width="0.6"/><path d="M2.6 6.2H13.8L10.6 12.2H-0.8Z" fill="url(#gfold)" stroke="#8a5a10" stroke-width="0.7"/></g>
<path d="M8 53.1C9.2 50.5 12 50.5 13 53.3" fill="none" stroke="#000" stroke-width="1.2"/><path d="M11 53.5H14.2V50.3Z" fill="#000"/>
<rect x="22.2" y="51" width="13.6" height="13.8" rx="0.8" fill="url(#gflop)" stroke="#3038a0" stroke-width="0.6"/>
<rect x="24.6" y="52" width="8.6" height="6" fill="#f4f6ff"/><rect x="25.6" y="60.2" width="6.4" height="4.6" fill="#1c1c40"/><rect x="27.6" y="61.2" width="3.4" height="3.4" fill="#e8e8f4"/>
<rect x="34" y="52.6" width="1" height="1.4" fill="#202060"/>
<path d="M47.8 52.6H58.6L56.6 58.2H45.8Z" fill="#f4fbf0" stroke="#6a7a98" stroke-width="0.7"/>
<path d="M49 57L51.8 54.4L53 55.2L54.2 54.6" fill="none" stroke="#9be000" stroke-width="1.1"/>
<path d="M44.6 59L46 57.8H58.8V64.2L57.4 65.6H44.6Z" fill="#e9eef8" stroke="#4a5c80" stroke-width="0.7"/>
<path d="M57 58V65.4L58.8 64V58Z" fill="#4a5c80"/>
<rect x="45" y="59.4" width="12" height="1" fill="#fff"/><rect x="45" y="63.6" width="12" height="1.6" fill="#5a6c94"/>
<rect x="53" y="60.8" width="3" height="2.6" fill="#10c010"/>
<rect x="77" y="57" width="10" height="10" fill="#8e9cc4"/><rect x="79.4" y="57" width="5.8" height="3.4" fill="#b4bcd4"/><rect x="79.6" y="62.8" width="6" height="4.2" fill="#a0a8c0"/><rect x="82" y="63.8" width="2.4" height="2.6" fill="#c4cad8"/>
<rect x="70.4" y="50.4" width="12.6" height="9.2" fill="#bcc1cf" stroke="#a2a4ae" stroke-width="0.9"/>
<path d="M71.2 54.6C72.6 52 73.8 52 75 54.2C76.6 57.2 78 57.6 79.4 56.6L82.4 54.4" fill="none" stroke="#84b48e" stroke-width="1"/>
<rect x="100" y="57" width="10" height="10" fill="#8e9cc4"/><rect x="102.4" y="57" width="5.8" height="3.4" fill="#b4bcd4"/><rect x="102.6" y="62.8" width="6" height="4.2" fill="#a0a8c0"/><rect x="105" y="63.8" width="2.4" height="2.6" fill="#c4cad8"/>
<rect x="93.5" y="50.5" width="10" height="9" fill="#bcc1cf" stroke="#7f8fb8" stroke-width="1" stroke-dasharray="2 1"/>
<path d="M94.2 54.6L96.6 52.2L100 57.2L103 54.6" fill="none" stroke="#84b48e" stroke-width="1"/>
<rect x="123.2" y="57" width="9.8" height="9" fill="#8e9cc4"/><rect x="125.60000000000001" y="57" width="5.6000000000000005" height="3.4" fill="#b4bcd4"/><rect x="125.8" y="62.8" width="5.800000000000001" height="3.2" fill="#a0a8c0"/><rect x="128.2" y="63.8" width="2.4" height="2.6" fill="#c4cad8"/>
<path d="M118.4 62.4L125.2 55.4" stroke="#86868c" stroke-width="1.7" stroke-linecap="round"/>
<path d="M121.2 52.2L123.8 51H126.2L128.6 53.6L130.4 56L128.6 58L126.4 55.6L124 54Z" fill="#80b08a" stroke="#8a8e94" stroke-width="0.6"/>
<path d="M145 64.5H146L146.8 63.2L147.4 64.6H148.4L149.2 62.6L150 64.4L151 63.4L151.5 51V63L152.4 62L153.4 64.4H155L155.8 63.6L156.6 64.5H159" fill="none" stroke="#0a8a0a" stroke-width="1.05"/>
<rect x="166.6" y="55.3" width="16.4" height="5.2" fill="#00ffff"/><path d="M166 55.3H183M166 60.6H183" stroke="#9a6a6a" stroke-width="0.8"/>
<path d="M166.8 59L169.4 55.6L171.2 52.2V55.4L174.4 55.6L176 59.6L178.6 60.8V63.6M178.6 60.6L182.4 60.4L183 57.6" fill="none" stroke="#00a0b0" stroke-width="0.9"/>
<path d="M168.6 55.4L165.79999999999998 52.699999999999996H167.79999999999998V50.9H169.4V52.699999999999996H171.4Z" fill="#000"/>
<path d="M168.6 60.6L165.79999999999998 63.300000000000004H167.79999999999998V65.1H169.4V63.300000000000004H171.4Z" fill="#000"/>
<path d="M195.4 54.3L192.6 51.599999999999994H194.6V49.8H196.20000000000002V51.599999999999994H198.20000000000002Z" fill="#000"/>
<path d="M195.4 54.5L192.6 57.2H194.6V59.0H196.20000000000002V57.2H198.20000000000002Z" fill="#000"/>
<path d="M195.4 62L192.6 64.7H194.6V66.5H196.20000000000002V64.7H198.20000000000002Z" fill="#000"/>
<path d="M197.5 54.5H200.5M198 62.4H204" stroke="#8c8c8c" stroke-width="0.9" stroke-dasharray="1 1"/>
<path d="M199 57.6C200.4 57 200.6 54 202.4 54C204.6 54 204.2 62.6 206.8 62.6C208.4 62.6 208.6 60.4 209.8 59.2" fill="none" stroke="#0a8a0a" stroke-width="1.1" stroke-dasharray="1.6 0.5"/>
<path d="M232.5 58.3L229.7 55.599999999999994H231.7V53.8H233.3V55.599999999999994H235.3Z" fill="#000"/>
<path d="M232.5 58.6L229.7 61.300000000000004H231.7V63.1H233.3V61.300000000000004H235.3Z" fill="#000"/>
<path d="M230.5 58.5H236" stroke="#8c8c8c" stroke-width="0.9"/><path d="M241 58.5H246.5" stroke="#8c8c8c" stroke-width="0.9" stroke-dasharray="1 1"/>
<path d="M236 57.6C237.4 57 237.6 54 239.4 54C241.6 54 241.2 62.6 243.8 62.6C245.4 62.6 245.6 60.4 246.8 59.2" fill="none" stroke="#0a8a0a" stroke-width="1.1" stroke-dasharray="1.6 0.5"/>
<path d="M269.2 53.6V60L275.6 59.6L273.4 57.6C275.4 56 277.6 56.2 278.4 58C279.2 60 277.8 62 275.4 63.6L276.6 65.4C280.4 63.4 282.2 60.4 281 57C279.6 53.4 275 52.8 271.4 55.6Z" fill="#98a6c8"/>
<rect x="296.5" y="50.5" width="14.2" height="8.4" fill="#c0c0c0" stroke="#787878" stroke-width="1"/>
<path d="M299.2 53.6L301 57.6L304.8 51.6L306.6 52L307.8 55.6" fill="none" stroke="#0a78ff" stroke-width="1.1" stroke-dasharray="1.7 0.5"/>
<path d="M295.2 63L297.4 66.2L301.4 60.4L303.6 64.4" fill="none" stroke="#0a78ff" stroke-width="1.1" stroke-dasharray="1.7 0.5"/>
<path d="M307.4 58.4L311.2 61.8H308.2V62.8H306.6V61.8H303.8Z" fill="#2626a8"/>
<rect x="332.2" y="50.4" width="14.6" height="8.6" fill="#b4b9c8" stroke="#aeb2c0" stroke-width="0.6"/>
<path d="M335.2 55L336.6 56.2L340.6 51.4L343.2 55.6" fill="none" stroke="#9db4e0" stroke-width="0.8" stroke-dasharray="1.2 0.8"/>
<path d="M335.2 57L346 66.2M344.8 57L334.6 66.2" stroke="#b8a0a8" stroke-width="2"/>
<path d="M362.6 57.2L367.8 62L375.6 54.4L377 56.8L367.8 66.6L361 59.4Z" fill="url(#gchk)" stroke="#1a3f9a" stroke-width="0.5" stroke-linejoin="round"/>
<path d="M385.6 57.6L390.8 62.4L398.6 54.8L400 57.199999999999996L390.8 67.0L384 59.8Z" fill="url(#gchk)" stroke="#1a3f9a" stroke-width="0.5" stroke-linejoin="round"/>
<path d="M385.6 53L388.6 50.4V52H392.6V54.2H388.6V55.8Z" fill="#2a62c8"/>
<path d="M408.6 57.6L413.8 62.4L421.6 54.8L423 57.199999999999996L413.8 67.0L407 59.8Z" fill="url(#gchk)" stroke="#1a3f9a" stroke-width="0.5" stroke-linejoin="round"/>
<path d="M418.4 53L415.4 50.4V52H411V54.2H415.4V55.8Z" fill="#2a62c8"/>
<rect x="426.9" y="47.5" width="21.4" height="22" rx="1.6" fill="#fff" stroke="#7e7c72" stroke-width="1"/>
<path d="M431.4 50.4H441L443.8 53.2V66.4H431.4Z" fill="#fff" stroke="#8a867a" stroke-width="0.9"/><path d="M441 50.4V53.2H443.8" fill="#e8e4d8" stroke="#8a867a" stroke-width="0.7"/>
<path d="M436.6 53.0H442.6" stroke="#a9c4ee" stroke-width="0.8"/><path d="M432.6 52.4L433.8 53.8L436.2 51.0" fill="none" stroke="#1f4fd0" stroke-width="0.9"/>
<path d="M436.6 56.800000000000004H442.6" stroke="#a9c4ee" stroke-width="0.8"/><path d="M432.6 56.2L433.8 57.6L436.2 54.800000000000004" fill="none" stroke="#1f4fd0" stroke-width="0.9"/>
<path d="M436.6 60.6H442.6" stroke="#a9c4ee" stroke-width="0.8"/><path d="M432.6 60L433.8 61.4L436.2 58.6" fill="none" stroke="#1f4fd0" stroke-width="0.9"/>
<path d="M436.6 64.39999999999999H442.6" stroke="#a9c4ee" stroke-width="0.8"/><path d="M432.6 63.8L433.8 65.2L436.2 62.4" fill="none" stroke="#1f4fd0" stroke-width="0.9"/>
<rect x="458.6" y="52" width="11.8" height="12" fill="#fff"/>
<rect x="458.3" y="51.5" width="12.4" height="13" fill="none" stroke="#1c3cc0" stroke-width="1.1" stroke-dasharray="2 1.2"/>
<path d="M456.7 51.5L458.3 49.9L459.90000000000003 51.5L458.3 53.1Z" fill="#1c3cc0"/>
<path d="M469.09999999999997 51.5L470.7 49.9L472.3 51.5L470.7 53.1Z" fill="#1c3cc0"/>
<path d="M456.7 64.5L458.3 62.9L459.90000000000003 64.5L458.3 66.1Z" fill="#1c3cc0"/>
<path d="M469.09999999999997 64.5L470.7 62.9L472.3 64.5L470.7 66.1Z" fill="#1c3cc0"/>
<path d="M459.4 56.4C460.6 53 462.8 52.8 464 55.4C465.4 58.6 467.8 59.2 469.8 55.2" fill="none" stroke="#0a8a0a" stroke-width="1.3"/>
<path d="M459 60.6H460.8V62H463.2V58.6H464.4V62H465.6V60.6H470" fill="none" stroke="#1c3cc0" stroke-width="1"/>
<rect x="479.4" y="50.4" width="10.2" height="9.2" fill="#bcc1d2" stroke="#8f9bbd" stroke-width="0.8" stroke-dasharray="1.8 1"/>
<path d="M480.2 54.4L482 52.6L485.4 57.2L488.6 54.6" fill="none" stroke="#84b48e" stroke-width="0.8"/>
<path d="M490.6 62.4L486.6 66.2" stroke="#98a4c4" stroke-width="1.6" stroke-linecap="round"/><circle cx="492.8" cy="60.2" r="3" fill="#e8ecf6" stroke="#a4aecb" stroke-width="0.9"/>
<text x="505.9" y="55" font-family="Liberation Mono, monospace" font-weight="700" font-size="6.4" textLength="17.2" lengthAdjust="spacingAndGlyphs" fill="#1a2a98">A:B+C</text>
<g transform="translate(508.2 56.2) scale(0.95)"><path d="M-1 2.5L0 1.2H4.3L5.6 2.8H10.2V6H-1Z" fill="#f7d98a" stroke="#b98a2a" stroke-width="0.6"/><path d="M-1 12V4.2L0 3.4H4L5 4.6H10V12Z" fill="#f5cf70" stroke="#a87a20" stroke-width="0.6"/><path d="M2.6 6.2H13.8L10.6 12.2H-0.8Z" fill="url(#gfold)" stroke="#8a5a10" stroke-width="0.7"/></g>
<path d="M516.8 58.0C518.0 55.4 520.8 55.4 521.8 58.199999999999996" fill="none" stroke="#000" stroke-width="1.2"/><path d="M519.8 58.4H523.0V55.199999999999996Z" fill="#000"/>
<text x="542.9" y="55" font-family="Liberation Mono, monospace" font-weight="700" font-size="6.4" textLength="17.2" lengthAdjust="spacingAndGlyphs" fill="#9aa6c6">A:B+C</text>
<path d="M549 56.4L555 61.6L549 67Z" fill="#98a4c2"/>
<text x="566" y="55" font-family="Liberation Mono, monospace" font-weight="700" font-size="6.4" textLength="17.2" lengthAdjust="spacingAndGlyphs" fill="#9aa6c6">A:B+C</text>
<rect x="569.3" y="56.3" width="10.5" height="10.5" fill="#98a4c2"/>
<text x="593" y="55" font-family="Liberation Mono, monospace" font-weight="700" font-size="6.4" textLength="17.2" lengthAdjust="spacingAndGlyphs" fill="#1a2a98">A:B+C</text>
<rect x="593.7" y="57.7" width="16" height="8.8" fill="#fff" stroke="#000" stroke-width="1"/><rect x="594" y="58" width="15.4" height="2.4" fill="#0a246a"/>
<rect x="605" y="58.6" width="1" height="1" fill="#fff"/><rect x="607" y="58.6" width="1" height="1" fill="#fff"/>
<path d="M601.5 60.4V66.4" stroke="#000" stroke-width="0.8"/><path d="M595.4 62.2H597.4M598.4 62.2H600.4M595.4 64.4H597.4M598.4 64.4H600.4" stroke="#9a9a9a" stroke-width="1"/>
<path d="M603.6 65V62.4H608.4" fill="none" stroke="#000" stroke-width="1.2"/>
<path d="M593.6 67.2H610" stroke="#000" stroke-width="0.9"/>
<rect x="634.4" y="51.6" width="16.4" height="14" fill="#bcc1d0" stroke="#a6a8b2" stroke-width="0.9"/>
<path d="M636.6 57.6C638 54.6 639.6 52.6 641.2 53.4C643.2 54.4 644.4 58.6 646.4 58.2C648 57.8 649 56 650.4 54" fill="none" stroke="#8ab892" stroke-width="1" stroke-dasharray="1.4 0.6"/>
<path d="M636.6 61.4H639V62.8H642V58.6H643V62.8H644.6V61.4H650.6" fill="none" stroke="#8e9cc4" stroke-width="0.9"/>
<path d="M659 51.2H669.4L672 53.800000000000004V66.8H659Z" fill="#bcc1d0" stroke="#aeb2c0" stroke-width="0.7"/>
<path d="M660.8 54.800000000000004L661.6 55.4L663 53.6" fill="none" stroke="#84b48e" stroke-width="0.9"/>
<path d="M660.8 58.400000000000006L661.6 59.0L663 57.2" fill="none" stroke="#84b48e" stroke-width="0.9"/>
<path d="M660.8 62.00000000000001L661.6 62.6L663 60.800000000000004" fill="none" stroke="#84b48e" stroke-width="0.9"/>
<path d="M682 51.2H692.1999999999999L694.8 53.800000000000004V66.8H682Z" fill="#bcc1d0" stroke="#aeb2c0" stroke-width="0.7"/>
<path d="M683.8 54.800000000000004L684.6 55.4L686 53.6" fill="none" stroke="#84b48e" stroke-width="0.9"/>
<path d="M683.8 58.400000000000006L684.6 59.0L686 57.2" fill="none" stroke="#84b48e" stroke-width="0.9"/>
<path d="M683.8 62.00000000000001L684.6 62.6L686 60.800000000000004" fill="none" stroke="#84b48e" stroke-width="0.9"/>
<path d="M681 51L697.4 66.4M697 51L681 66.4" stroke="#bd9aa2" stroke-width="1.2"/>
<circle cx="717" cy="59.8" r="7.2" fill="#8e93a4" opacity="0.55"/><circle cx="716.2" cy="59" r="7.3" fill="#fff"/><circle cx="716.2" cy="59" r="6" fill="url(#ghelp)"/>
<text x="716.3" y="63.4" font-family="Liberation Sans, sans-serif" font-weight="700" font-size="12" text-anchor="middle" fill="#fff">?</text>
</svg>
<div class="grp" id="title-text">
<span class="t" style="left:10.40px;top:7px;font-size:14.53px;line-height:14.53px;color:#fff;font-weight:700;transform:scaleX(0.8071);text-shadow:1px 1px 0 #0a2a8c;">USB</span> 
<span class="t" style="left:38.70px;top:7px;font-size:14.53px;line-height:14.53px;color:#fff;font-weight:700;transform:scaleX(0.8413);text-shadow:1px 1px 0 #0a2a8c;">Oscilloscope</span> 
<span class="t" style="left:119.38px;top:7px;font-size:14.53px;line-height:14.53px;color:#fff;font-weight:700;transform:scaleX(1.0856);text-shadow:1px 1px 0 #0a2a8c;">-</span> 
<span class="t" style="left:127.74px;top:7px;font-size:14.53px;line-height:14.53px;color:#fff;font-weight:700;transform:scaleX(0.9921);text-shadow:1px 1px 0 #0a2a8c;">I:\</span> 
<span class="t" style="left:145.65px;top:7px;font-size:14.53px;line-height:14.53px;color:#fff;font-weight:700;transform:scaleX(0.9732);text-shadow:1px 1px 0 #0a2a8c;">\21</span> 
<span class="t" style="left:170.50px;top:7px;font-size:14.53px;line-height:14.53px;color:#fff;font-weight:700;transform:scaleX(0.8896);text-shadow:1px 1px 0 #0a2a8c;">июня</span> 
<span class="t" style="left:208.32px;top:7px;font-size:14.53px;line-height:14.53px;color:#fff;font-weight:700;transform:scaleX(0.9560);text-shadow:1px 1px 0 #0a2a8c;">2014\O2</span> 
<span class="t" style="left:265.88px;top:7px;font-size:14.53px;line-height:14.53px;color:#fff;font-weight:700;transform:scaleX(0.8408);text-shadow:1px 1px 0 #0a2a8c;">После</span> 
<span class="t" style="left:308.31px;top:7px;font-size:14.53px;line-height:14.53px;color:#fff;font-weight:700;transform:scaleX(0.8943);text-shadow:1px 1px 0 #0a2a8c;">драйва.mwf</span> 
</div>
<span class="t" style="left:-8.20px;top:30px;font-size:11.63px;line-height:11.63px;color:#000;transform:scaleX(1.0112);">Файл</span>
<span class="t" style="left:32.61px;top:30px;font-size:11.63px;line-height:11.63px;color:#000;transform:scaleX(0.9405);">Управление</span>
<span class="t" style="left:104.98px;top:30px;font-size:11.63px;line-height:11.63px;color:#000;transform:scaleX(0.9430);">Операции</span>
<span class="t" style="left:167.32px;top:30px;font-size:11.63px;line-height:11.63px;color:#000;transform:scaleX(0.9893);">Закладки</span>
<span class="t" style="left:228.78px;top:30px;font-size:11.63px;line-height:11.63px;color:#000;transform:scaleX(0.9179);">Анализ</span>
<span class="t" style="left:276.06px;top:30px;font-size:11.63px;line-height:11.63px;color:#000;transform:scaleX(0.9810);">Отображать</span>
<span class="t" style="left:352.39px;top:30px;font-size:11.63px;line-height:11.63px;color:#000;transform:scaleX(0.9880);">Утилиты</span>
<span class="t" style="left:409.15px;top:30px;font-size:11.63px;line-height:11.63px;color:#000;transform:scaleX(0.8970);">Помощь</span>
<span class="t" style="left:17.53px;top:80px;font-size:15.99px;line-height:15.99px;color:#00004e;transform:scaleX(0.8276);">Старт устройства</span>
<span class="t" style="left:17.51px;top:103px;font-size:15.99px;line-height:15.99px;color:#00004e;transform:scaleX(0.8329);">Режимы</span>
<span class="t" style="left:9.80px;top:128px;font-size:12.99px;line-height:12.99px;color:#000;font-weight:700;transform:scaleX(0.8768);">:</span>
<span class="t" style="left:14.54px;top:129px;font-size:15.99px;line-height:15.99px;color:#00004e;transform:scaleX(0.7915);">1:100</span>
<span class="t" style="left:79.70px;top:128px;font-size:12.99px;line-height:12.99px;color:#000;font-weight:700;transform:scaleX(0.8768);">:</span>
<span class="t" style="left:83.56px;top:129px;font-size:15.99px;line-height:15.99px;color:#00004e;transform:scaleX(0.8552);">1 s</span>
<span class="t" style="left:-5.42px;top:153px;font-size:18.17px;line-height:18.17px;color:#000;font-weight:700;transform:scaleX(0.9200);">1</span>
<span class="t" style="left:55.83px;top:155px;font-size:15.99px;line-height:15.99px;color:#1a3d9c;font-weight:700;transform:scaleX(0.8979);">...</span>
<span class="t" style="left:70.89px;top:155px;font-size:15.99px;line-height:15.99px;color:#00004e;transform:scaleX(0.8163);">0.2 V</span>
<span class="t" style="left:-5.72px;top:176px;font-size:18.17px;line-height:18.17px;color:#000;font-weight:700;transform:scaleX(0.9200);">2</span>
<span class="t" style="left:55.83px;top:178px;font-size:15.99px;line-height:15.99px;color:#1a3d9c;font-weight:700;transform:scaleX(0.8979);">...</span>
<span class="t" style="left:70.89px;top:178px;font-size:15.99px;line-height:15.99px;color:#00004e;transform:scaleX(0.8163);">0.2 V</span>
<span class="t" style="left:-5.79px;top:199px;font-size:18.17px;line-height:18.17px;color:#000;font-weight:700;transform:scaleX(0.9200);">3</span>
<span class="t" style="left:55.83px;top:201px;font-size:15.99px;line-height:15.99px;color:#1a3d9c;font-weight:700;transform:scaleX(0.8979);">...</span>
<span class="t" style="left:70.89px;top:201px;font-size:15.99px;line-height:15.99px;color:#00004e;transform:scaleX(0.8163);">0.2 V</span>
<span class="t" style="left:-6.10px;top:222px;font-size:18.17px;line-height:18.17px;color:#000;font-weight:700;transform:scaleX(0.9200);">4</span>
<span class="t" style="left:55.83px;top:224px;font-size:15.99px;line-height:15.99px;color:#1a3d9c;font-weight:700;transform:scaleX(0.8979);">...</span>
<span class="t" style="left:70.89px;top:224px;font-size:15.99px;line-height:15.99px;color:#00004e;transform:scaleX(0.8163);">0.2 V</span>
<span class="t" style="left:13.36px;top:249px;font-size:18.9px;line-height:18.9px;color:#000;transform:scaleX(0.9333);">1</span>
<span class="t" style="left:66.30px;top:248px;font-size:12.99px;line-height:12.99px;color:#000;font-weight:700;transform:scaleX(0.8768);">:</span>
<span class="t" style="left:70.99px;top:250px;font-size:15.99px;line-height:15.99px;color:#00004e;transform:scaleX(0.8198);">0 V</span>
<span class="t" style="left:14.10px;top:273px;font-size:15.99px;line-height:15.99px;color:#00004e;transform:scaleX(0.7995);">00000:01:52.280.0</span>
<span class="t" style="left:-3.44px;top:296px;font-size:20.35px;line-height:20.35px;color:#000;transform:scaleX(0.9934);">A</span>
<span class="t" style="left:9.60px;top:297px;font-size:12.99px;line-height:12.99px;color:#000;font-weight:700;transform:scaleX(0.8768);">:</span>
<span class="t" style="left:14.10px;top:299px;font-size:15.99px;line-height:15.99px;color:#00004e;transform:scaleX(0.7995);">00000:01:53.280.0</span>
<span class="t" style="left:-4.39px;top:319px;font-size:20.35px;line-height:20.35px;color:#000;transform:scaleX(1.0714);">B</span>
<span class="t" style="left:9.60px;top:320px;font-size:12.99px;line-height:12.99px;color:#000;font-weight:700;transform:scaleX(0.8768);">:</span>
<span class="t" style="left:14.10px;top:322px;font-size:15.99px;line-height:15.99px;color:#00004e;transform:scaleX(0.7995);">00000:02:07.480.0</span>
<span class="t" style="left:-4.00px;top:342px;font-size:20.35px;line-height:20.35px;color:#000;transform:scaleX(1.0212);">Ф</span>
<span class="t" style="left:9.60px;top:343px;font-size:12.99px;line-height:12.99px;color:#000;font-weight:700;transform:scaleX(0.8768);">:</span>
<span class="t" style="left:13.41px;top:345px;font-size:15.99px;line-height:15.99px;color:#00004e;transform:scaleX(0.9517);">...</span>
<span class="t" style="left:7.55px;top:370px;font-size:14.53px;line-height:14.53px;color:#00003c;transform:scaleX(0.8778);">Lambda</span>
<span class="t" style="left:-7.20px;top:389px;font-size:29.07px;line-height:29.07px;color:#000;transform:scaleX(0.9210);">A:</span>
<span class="t" style="left:18.93px;top:389px;font-size:29.07px;line-height:29.07px;color:#000;transform:scaleX(0.9210);">790.5 mV</span>
<span class="t" style="left:-7.20px;top:415px;font-size:29.07px;line-height:29.07px;color:#000;transform:scaleX(0.9210);clip-path:inset(0 0 4.07px 0);">Δ:</span>
<span class="t" style="left:19.11px;top:415px;font-size:29.07px;line-height:29.07px;color:#000;transform:scaleX(0.9210);clip-path:inset(0 0 4.07px 0);">-755.2 mV</span>
<span class="t" style="left:7.55px;top:444px;font-size:14.53px;line-height:14.53px;color:#00003c;transform:scaleX(0.8778);">Lambda</span>
<span class="t" style="left:-7.20px;top:463px;font-size:29.07px;line-height:29.07px;color:#000;transform:scaleX(0.9210);">A:</span>
<span class="t" style="left:18.95px;top:463px;font-size:29.07px;line-height:29.07px;color:#000;transform:scaleX(0.9210);">21.98 mV</span>
<span class="t" style="left:-7.20px;top:489px;font-size:29.07px;line-height:29.07px;color:#000;transform:scaleX(0.9210);clip-path:inset(0 0 4.07px 0);">Δ:</span>
<span class="t" style="left:19.04px;top:489px;font-size:29.07px;line-height:29.07px;color:#000;transform:scaleX(0.9210);clip-path:inset(0 0 4.07px 0);">915.8 µV</span>
<span class="t" style="left:7.55px;top:518px;font-size:14.53px;line-height:14.53px;color:#00003c;transform:scaleX(0.8778);">Lambda</span>
<span class="t" style="left:-7.20px;top:537px;font-size:29.07px;line-height:29.07px;color:#000;transform:scaleX(0.9210);">A:</span>
<span class="t" style="left:18.95px;top:537px;font-size:29.07px;line-height:29.07px;color:#000;transform:scaleX(0.9210);">23.81 mV</span>
<span class="t" style="left:-7.20px;top:563px;font-size:29.07px;line-height:29.07px;color:#000;transform:scaleX(0.9210);clip-path:inset(0 0 4.07px 0);">Δ:</span>
<span class="t" style="left:19.11px;top:563px;font-size:29.07px;line-height:29.07px;color:#000;transform:scaleX(0.9210);clip-path:inset(0 0 4.07px 0);">-457.9 µV</span>
<span class="t" style="left:7.55px;top:592px;font-size:14.53px;line-height:14.53px;color:#00003c;transform:scaleX(0.8778);">Lambda</span>
<span class="t" style="left:-7.20px;top:611px;font-size:29.07px;line-height:29.07px;color:#000;transform:scaleX(0.9210);">A:</span>
<span class="t" style="left:18.95px;top:611px;font-size:29.07px;line-height:29.07px;color:#000;transform:scaleX(0.9210);">26.56 mV</span>
<span class="t" style="left:-7.20px;top:637px;font-size:29.07px;line-height:29.07px;color:#000;transform:scaleX(0.9210);clip-path:inset(0 0 4.07px 0);">Δ:</span>
<span class="t" style="left:19.25px;top:637px;font-size:29.07px;line-height:29.07px;color:#000;transform:scaleX(0.9210);clip-path:inset(0 0 4.07px 0);">0 V</span>
<span class="t" style="left:-6.30px;top:666px;font-size:14.53px;line-height:14.53px;color:#00003c;transform:scaleX(0.8652);">A-B интервал</span>
<span class="t" style="left:-7.20px;top:685px;font-size:29.07px;line-height:29.07px;color:#000;transform:scaleX(0.9210);">T:</span>
<span class="t" style="left:18.26px;top:685px;font-size:29.07px;line-height:29.07px;color:#000;transform:scaleX(0.9210);">14.2 s</span>
<span class="t" style="left:-7.20px;top:711px;font-size:29.07px;line-height:29.07px;color:#000;transform:scaleX(0.9210);clip-path:inset(0 0 4.07px 0);">F:</span>
<span class="t" style="left:18.93px;top:711px;font-size:29.07px;line-height:29.07px;color:#000;transform:scaleX(0.9210);clip-path:inset(0 0 4.07px 0);">70.42 mHz</span>
<span class="t" style="left:165.38px;top:776px;font-size:13.08px;line-height:13.08px;color:#00003c;transform:scaleX(0.8245);clip-path:inset(0 0 0.08px 0);">00000:00:10.180.0</span>
<span class="t" style="left:266.04px;top:776px;font-size:13.08px;line-height:13.08px;color:#00003c;transform:scaleX(0.8493);clip-path:inset(0 0 0.08px 0);">Запуск мотора.</span>
<span class="t" style="left:165.38px;top:790px;font-size:13.08px;line-height:13.08px;color:#00003c;transform:scaleX(0.8245);clip-path:inset(0 0 0.08px 0);">00000:01:47.320.0</span>
<span class="t" style="left:266.32px;top:790px;font-size:13.08px;line-height:13.08px;color:#00003c;transform:scaleX(0.8760);clip-path:inset(0 0 0.08px 0);">Дроссель открыт.</span>
<span class="t" style="left:165.38px;top:804px;font-size:13.08px;line-height:13.08px;color:#00003c;transform:scaleX(0.8245);clip-path:inset(0 0 0.08px 0);">00000:02:33.200.0</span>
<span class="t" style="left:266.32px;top:804px;font-size:13.08px;line-height:13.08px;color:#00003c;transform:scaleX(0.8819);clip-path:inset(0 0 0.08px 0);">Дросель закрыт.</span>
<span class="t" style="left:165.38px;top:818px;font-size:13.08px;line-height:13.08px;color:#00003c;transform:scaleX(0.8245);clip-path:inset(0 0 0.08px 0);">00000:03:21.080.0</span>
<span class="t" style="left:266.32px;top:818px;font-size:13.08px;line-height:13.08px;color:#00003c;transform:scaleX(0.8760);clip-path:inset(0 0 0.08px 0);">Дроссель открыт.</span>
<span class="t" style="left:165.38px;top:832px;font-size:13.08px;line-height:13.08px;color:#00003c;transform:scaleX(0.8245);clip-path:inset(0 0 0.08px 0);">00000:04:04.000.0</span>
<span class="t" style="left:266.32px;top:832px;font-size:13.08px;line-height:13.08px;color:#00003c;transform:scaleX(0.8822);clip-path:inset(0 0 0.08px 0);">Дроссель закрыт.</span>
<span class="t" style="left:166.80px;top:303px;font-size:17.44px;line-height:17.44px;color:#fff;font-weight:700;transform:scaleX(0.9983);">1</span>
<span class="t" style="left:166.23px;top:367px;font-size:17.44px;line-height:17.44px;color:#ffcc8f;font-weight:700;transform:scaleX(1.1078);">2</span>
<span class="t" style="left:166.47px;top:492px;font-size:17.44px;line-height:17.44px;color:#ffff80;font-weight:700;transform:scaleX(1.0730);">3</span>
<span class="t" style="left:166.64px;top:617px;font-size:17.44px;line-height:17.44px;color:#80ff80;font-weight:700;transform:scaleX(0.9957);">4</span>
<span class="t" style="left:207.70px;top:725px;font-size:11.63px;line-height:11.63px;color:#b8b800;font-weight:700;transform:scaleX(1.0386);">A</span>
<span class="t" style="left:562.12px;top:737px;font-size:11.63px;line-height:11.63px;color:#b8b800;font-weight:700;transform:scaleX(1.1285);">B</span>
</div>
</body></html>
